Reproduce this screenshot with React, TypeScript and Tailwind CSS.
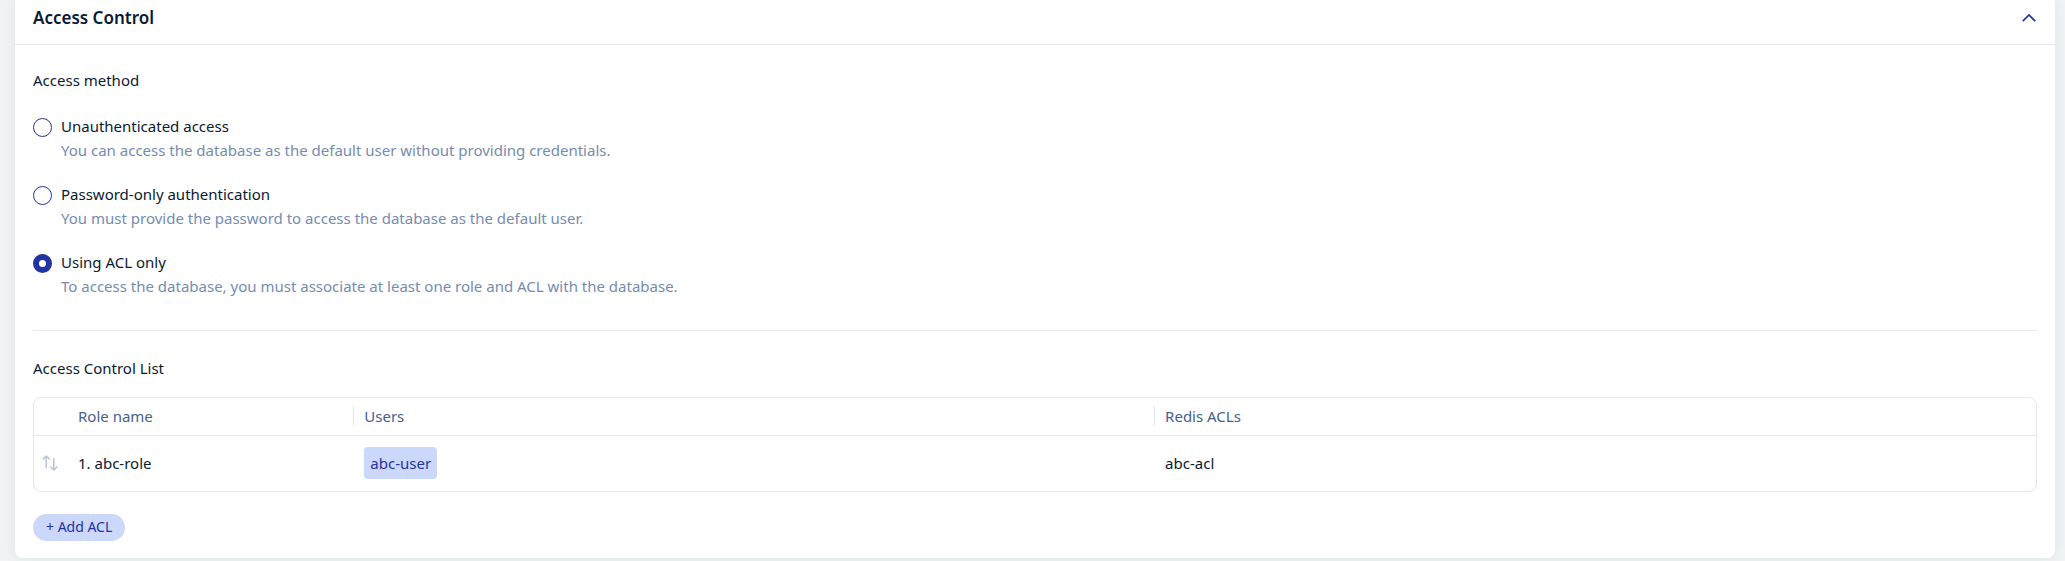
import { useState } from "react";

const methods = [
  {
    id: "unauthenticated",
    title: "Unauthenticated access",
    description: "You can access the database as the default user without providing credentials.",
  },
  {
    id: "password",
    title: "Password-only authentication",
    description: "You must provide the password to access the database as the default user.",
  },
  {
    id: "acl",
    title: "Using ACL only",
    description: "To access the database, you must associate at least one role and ACL with the database.",
  },
];

const rows = [{ role: "abc-role", user: "abc-user", acl: "abc-acl" }];

function ChevronUp() {
  return (
    <svg width="14" height="8" viewBox="0 0 14 8" fill="none" stroke="#2233a3" strokeWidth="1.7" aria-hidden="true">
      <path d="M.8 7.2 7 1l6.2 6.2" />
    </svg>
  );
}

function ReorderIcon() {
  return (
    <svg width="16" height="16" viewBox="0 0 16 16" fill="none" stroke="#b9c5d6" strokeWidth="1.5" strokeLinecap="round" strokeLinejoin="round" aria-hidden="true">
      <path d="M4.2 12.8V1.1M1 4l3.2-3L7.4 4M11.8 3.8v11.1M8.6 12l3.2 3 3.2-3" />
    </svg>
  );
}

function MethodOption({ method, checked, onSelect }: { method: (typeof methods)[number]; checked: boolean; onSelect: () => void }) {
  return (
    <div className="flex gap-[9px]">
      <input
        type="radio"
        id={method.id}
        name="access-method"
        checked={checked}
        onChange={onSelect}
        aria-describedby={`${method.id}-description`}
        className="mt-1 size-[19px] shrink-0 cursor-pointer appearance-none rounded-full border border-[#2233a3] bg-white checked:border-[6px]"
      />
      <div>
        <label htmlFor={method.id} className="block cursor-pointer">
          {method.title}
        </label>
        <p id={`${method.id}-description`} className="text-[#768cb0]">
          {method.description}
        </p>
      </div>
    </div>
  );
}

export default function App() {
  const [selected, setSelected] = useState("acl");
  const [open, setOpen] = useState(true);

  return (
    <main className="bg-[#f0f4f5] pr-[10px] pb-[3px] pl-[15px] font-['Noto_Sans','Open_Sans',sans-serif] text-[15px] leading-6 text-[#091a33]">
      <section className="rounded-b-lg bg-white shadow-[0_0_14px_rgba(9,40,50,0.09)]">
        <header className="flex items-start justify-between border-b border-[#e6e7ef] pt-[6px] pr-[19px] pb-[14px] pl-[18px]">
          <h2 className="text-[17px] leading-6 font-semibold">Access Control</h2>
          <button
            type="button"
            aria-label="Toggle Access Control"
            aria-expanded={open}
            onClick={() => setOpen(!open)}
            className="flex h-6 items-center"
          >
            <ChevronUp />
          </button>
        </header>

        {open && (
          <div className="px-[18px] pt-[23px] pb-[17px]">
            <fieldset>
              <legend>Access method</legend>
              <div className="mt-[22px] flex flex-col gap-5">
                {methods.map((method) => (
                  <MethodOption
                    key={method.id}
                    method={method}
                    checked={selected === method.id}
                    onSelect={() => setSelected(method.id)}
                  />
                ))}
              </div>
            </fieldset>

            <hr className="mt-8 mb-[25px] border-[#e6e7ef]" />

            <h3>Access Control List</h3>
            <div className="mt-[17px] rounded-lg border border-[#e6e7ef]">
              <table className="w-full table-fixed text-left">
                <thead>
                  <tr className="h-[37px] border-b border-[#e6e7ef] text-[#47608e]">
                    <th className="w-[16%] font-normal">
                      <div className="border-r border-[#e6e7ef] pl-11 leading-5">Role name</div>
                    </th>
                    <th className="w-2/5 font-normal">
                      <div className="border-r border-[#e6e7ef] pl-[10px] leading-5">Users</div>
                    </th>
                    <th className="font-normal">
                      <div className="pl-[10px] leading-5">Redis ACLs</div>
                    </th>
                  </tr>
                </thead>
                <tbody>
                  {rows.map((row, index) => (
                    <tr key={row.role} className="h-14">
                      <td>
                        <div className="flex items-center gap-5 pl-2">
                          <ReorderIcon />
                          <span>{index + 1}. {row.role}</span>
                        </div>
                      </td>
                      <td className="pl-[10px]">
                        <span className="inline-block rounded bg-[#ccd7fc] px-[6px] py-1 align-middle leading-6 text-[#2233a3]">
                          {row.user}
                        </span>
                      </td>
                      <td className="pl-[10px]">{row.acl}</td>
                    </tr>
                  ))}
                </tbody>
              </table>
            </div>

            <button
              type="button"
              className="mt-[22px] flex h-[27px] items-center rounded-full bg-[#ccd7fc] px-[13px] pb-px text-[14px] text-[#2233a3]"
            >
              + Add ACL
            </button>
          </div>
        )}
      </section>
    </main>
  );
}
